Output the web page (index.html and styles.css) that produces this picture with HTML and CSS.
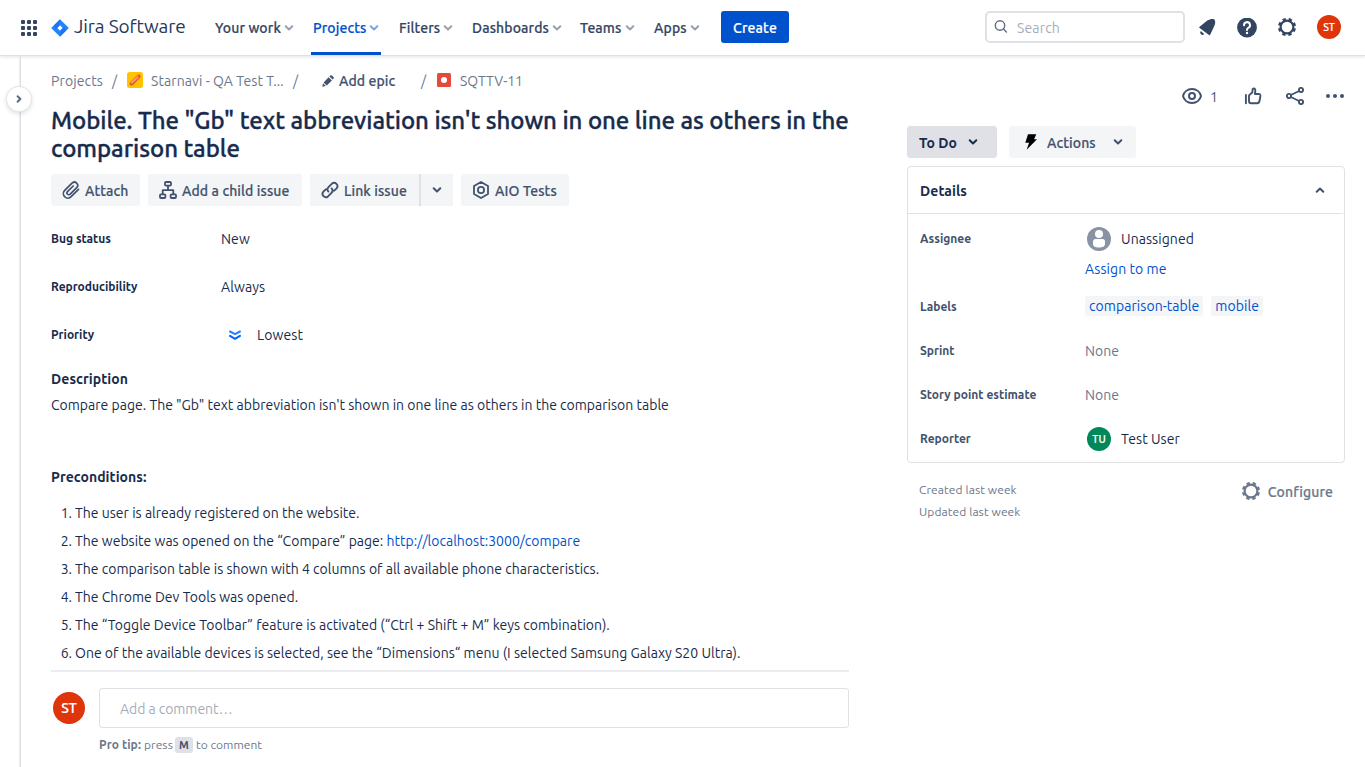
FILE: index.html
```html
<!DOCTYPE html>
<html lang="en">
<head>
<meta charset="utf-8">
<title>SQTTV-11 - Jira Software</title>
<link rel="stylesheet" href="styles.css">
</head>
<body>
<svg width="0" height="0" class="defs">
  <symbol id="chev" viewBox="0 0 10 8"><path d="M1.7 2.2 5 5.5 8.3 2.2" fill="none" stroke="currentColor" stroke-width="2" stroke-linecap="round" stroke-linejoin="round"/></symbol>
  <symbol id="gear" viewBox="0 0 24 24"><g fill="none" stroke="currentColor"><circle cx="12" cy="12" r="6.4" stroke-width="2.2"/><circle cx="12" cy="12" r="7.9" stroke-width="2.4" stroke-dasharray="3.3 2.905" stroke-dashoffset="-1.45"/></g></symbol>
</svg>
<header class="top">
  <svg class="switcher" width="16" height="16" viewBox="0 0 16 16" fill="#344563"><rect width="4" height="4" rx="1"/><rect x="6" width="4" height="4" rx="1"/><rect x="12" width="4" height="4" rx="1"/><rect y="6" width="4" height="4" rx="1"/><rect x="6" y="6" width="4" height="4" rx="1"/><rect x="12" y="6" width="4" height="4" rx="1"/><rect y="12" width="4" height="4" rx="1"/><rect x="6" y="12" width="4" height="4" rx="1"/><rect x="12" y="12" width="4" height="4" rx="1"/></svg>
  <div class="logo">
    <svg width="18" height="18" viewBox="0 0 18 18"><path fill="#2684ff" fill-rule="evenodd" d="M9 .3 17.4 8.4Q18 9 17.4 9.6L9 17.7.6 9.6Q0 9 .6 8.4ZM9 6.3 6.3 9 9 11.7 11.7 9Z"/><path fill="#0f62de" d="M9 .3V3.6Q7 5.4 9 6.3L4.6 10.6 3 6.2ZM9 17.7V14.4Q11 12.6 9 11.7L13.4 7.4 15 11.8Z" opacity=".45"/></svg>
    <span class="brand">Jira Software</span>
  </div>
  <nav class="nav">
    <a class="n1"><span>Your work</span><svg width="10" height="8"><use href="#chev"/></svg></a>
    <a class="n2 active"><span>Projects</span><svg width="10" height="8"><use href="#chev"/></svg></a>
    <a class="n3"><span>Filters</span><svg width="10" height="8"><use href="#chev"/></svg></a>
    <a class="n4"><span>Dashboards</span><svg width="10" height="8"><use href="#chev"/></svg></a>
    <a class="n5"><span>Teams</span><svg width="10" height="8"><use href="#chev"/></svg></a>
    <a class="n6"><span>Apps</span><svg width="10" height="8"><use href="#chev"/></svg></a>
  </nav>
  <button class="create"><span>Create</span></button>
  <div class="search"><svg width="14" height="14" viewBox="0 0 14 14" fill="none" stroke="#5e6c84" stroke-width="1.4" stroke-linecap="round"><circle cx="6" cy="5.500" r="4.700"/><path d="m9.500 9 2.900 2.900"/></svg><span>Search</span></div>
  <div class="tools">
    <svg width="20" height="20" viewBox="0 0 20 20"><path fill="#344563" d="M2.300 9.800Q1.900 9.300 2.600 8.800L10.300 2.600C12.500 1 16 .6 17.400 1.400 18.600 3.200 18.400 5.500 17.300 7.900L13.300 16.600Q12.800 17.500 12 16.900ZM3.800 13 7.200 16A2.200 2.200 0 0 1 3.800 13Z"/></svg>
    <svg width="20" height="20" viewBox="0 0 20 20"><circle cx="10" cy="9.500" r="9.900" fill="#344563"/><path d="M7 7.300A3 3 0 1 1 11.200 9.900Q10 10.500 10 11.900" fill="none" stroke="#fff" stroke-width="2" stroke-linecap="round"/><circle cx="10" cy="15" r="1.200" fill="#fff"/></svg>
    <svg class="gear-dark" width="24" height="24"><use href="#gear"/></svg>
    <span class="avatar a24 red">ST</span>
  </div>
</header>
<div class="page">
  <div class="rail"><span class="expand"><svg width="8" height="10" viewBox="0 0 8 10"><path d="M2.600 2.200 5.400 5 2.600 7.800" fill="none" stroke="#5e6c84" stroke-width="2" stroke-linecap="round" stroke-linejoin="round"/></svg></span></div>
  <main class="main">
    <div class="crumbs">
      <span class="c1">Projects</span><span class="sl s1">/</span>
      <svg class="proj" width="16" height="16" viewBox="0 0 16 16"><rect width="16" height="16" rx="2.500" fill="#ffc400"/><path d="M4.600 11.600 11.600 4.400" stroke="#f0541e" stroke-width="4.200" stroke-linecap="round"/><path d="M4 10.400 10.600 3.600" stroke="#ff8b2e" stroke-width="1.600" stroke-linecap="round"/><path d="m5 11.400 1.200-2.200 1.600-.4.600-1.600 1.800-.6 1-1.800" fill="none" stroke="#ffc9b0" stroke-width=".9"/></svg>
      <span class="c2">Starnavi - QA Test T...</span><span class="sl s2">/</span>
      <svg class="pencil" width="12" height="12" viewBox="0 0 12 12" fill="#42526e"><path d="M.3 11.700 1 8.200 3.900 11ZM1.600 7.500 6.600 2.300 9.900 5.400 4.800 10.500ZM7.400 1.500 8.400.6Q9.300 0 10.200.7L11.500 2Q12.200 2.800 11.600 3.600L10.700 4.600Z"/></svg>
      <span class="c3">Add epic</span><span class="sl s3">/</span>
      <svg class="bug" width="14" height="14" viewBox="0 0 14 14"><rect width="14" height="14" rx="1.500" fill="#e5493a"/><circle cx="7" cy="7" r="3" fill="#fff"/></svg>
      <span class="c4">SQTTV-11</span>
    </div>
    <h1>Mobile. The "Gb" text abbreviation isn't shown in one line as others in the<br>comparison table</h1>
    <div class="actions">
      <button class="btn b1"><svg width="18" height="18" viewBox="0 0 18 18" fill="none" stroke="#42526e" stroke-width="1.700" stroke-linecap="round"><path d="M16.500 8.300 9.100 15.700A4.400 4.400 0 0 1 2.700 9.400L10 2.200A3.200 3.200 0 0 1 14.700 6.700L8.200 13.200A1.800 1.800 0 0 1 5.500 10.600L11.200 5"/></svg><span>Attach</span></button>
      <button class="btn b2"><svg width="18" height="18" viewBox="0 0 18 18" fill="none" stroke="#42526e" stroke-width="1.800" stroke-linejoin="round"><rect x="6" y="1" width="6" height="3.600" rx="1"/><rect x="1" y="13.300" width="5.400" height="3.700" rx="1"/><rect x="11.600" y="13.300" width="5.400" height="3.700" rx="1"/><path d="M9 4.600V9M3.700 13V9.200H14.300V13"/></svg><span>Add a child issue</span></button>
      <div class="split"><button class="btn b3"><svg width="18" height="18" viewBox="0 0 18 18" fill="none" stroke="#42526e" stroke-width="1.900" stroke-linecap="round"><path d="M7.400 10.600A3.300 3.300 0 0 1 7.500 6.100L11 2.600A3.300 3.300 0 0 1 15.600 7.300L13.200 9.700M10.600 7.400A3.300 3.300 0 0 1 10.500 11.900L7 15.400A3.300 3.300 0 0 1 2.400 10.700L4.800 8.300"/></svg><span>Link issue</span></button><button class="btn more"><svg width="10" height="8"><use href="#chev"/></svg></button></div>
      <button class="btn b4"><svg width="18" height="18" viewBox="0 0 18 18" fill="none" stroke="#42526e" stroke-width="1.800" stroke-linejoin="round"><path d="m9 1 7 4v8l-7 4-7-4V5Z"/><circle cx="9" cy="9" r="3.100"/></svg><span>AIO Tests</span></button>
    </div>
    <dl class="fields">
      <dt>Bug status</dt><dd>New</dd>
      <dt>Reproducibility</dt><dd>Always</dd>
      <dt>Priority</dt><dd class="v3"><svg width="14" height="12" viewBox="0 0 14 12" fill="none" stroke-width="2" stroke-linecap="round" stroke-linejoin="round"><path d="M2 2.500 7 5.100 12 2.500" stroke="#2684ff"/><path d="M2 6.900 7 9.800 12 6.900" stroke="#0065ff"/></svg><span>Lowest</span></dd>
    </dl>
    <h2>Description</h2>
    <p class="desc">Compare page. The "Gb" text abbreviation isn't shown in one line as others in the comparison table</p>
    <h3>Preconditions:</h3>
    <ol class="steps">
      <li><i>1.</i><span>The user is already registered on the website.</span></li>
      <li><i>2.</i><span>The website was opened on the “Compare” page: <a>http://localhost:3000/compare</a></span></li>
      <li><i>3.</i><span>The comparison table is shown with 4 columns of all available phone characteristics.</span></li>
      <li><i>4.</i><span>The Chrome Dev Tools was opened.</span></li>
      <li><i>5.</i><span>The “Toggle Device Toolbar” feature is activated (“Ctrl + Shift + M” keys combination).</span></li>
      <li><i>6.</i><span>One of the available devices is selected, see the “Dimensions“ menu (I selected Samsung Galaxy S20 Ultra).</span></li>
    </ol>
    <div class="comment">
      <span class="avatar a32 red">ST</span>
      <div class="cbody">
        <div class="cbox">Add a comment…</div>
        <div class="tip"><b>Pro tip:</b><span class="t1">press</span><kbd>M</kbd><span>to comment</span></div>
      </div>
    </div>
  </main>
  <aside class="side">
    <div class="icons">
      <svg width="20" height="16" viewBox="0 0 20 16" fill="none" stroke="#42526e" stroke-width="2"><path d="M1 8C2 4 5.500 1 10 1S18 4 19 8C18 12 14.500 15 10 15S2 12 1 8Z"/><circle cx="10" cy="8" r="3"/></svg>
      <span class="watch">1</span>
      <svg class="thumb" width="18" height="18" viewBox="0 0 18 18" fill="none" stroke="#42526e" stroke-width="1.900" stroke-linejoin="round" stroke-linecap="round"><path d="M1.900 8V16.200M5 8.400 8 5.800Q8.600 5.200 8.500 3.300 8.500 1.500 9.900 1.500 11.400 1.500 11.300 4L10.900 7H14.700Q16.700 7 16.400 9L15.500 14Q15.100 16.200 13 16.200H7Q5 16.200 5 14.200Z"/></svg>
      <svg class="share" width="18" height="18" viewBox="0 0 18 18" fill="none" stroke="#42526e" stroke-width="1.900"><circle cx="3" cy="9" r="2.100"/><circle cx="15" cy="3" r="2.100"/><circle cx="15" cy="15" r="2.100"/><path d="M4.900 8 13.100 4M4.900 10 13.100 14"/></svg>
      <svg width="18" height="4" viewBox="0 0 18 4" fill="#42526e"><circle cx="2" cy="2" r="2"/><circle cx="9" cy="2" r="2"/><circle cx="16" cy="2" r="2"/></svg>
    </div>
    <div class="status">
      <button class="todo"><span>To Do</span><svg width="10" height="8"><use href="#chev"/></svg></button>
      <button class="act"><svg width="12" height="16" viewBox="0 0 12 16"><path d="M3 .3H11.300L9 5.200H12L1.600 15.800 4.100 8.700H.3Z"/></svg><span>Actions</span><svg width="10" height="8"><use href="#chev"/></svg></button>
    </div>
    <section class="panel">
      <div class="phead"><span>Details</span><svg width="10" height="8"><use href="#chev"/></svg></div>
      <div class="rows">
        <div class="row r1"><b>Assignee</b><div class="who"><svg width="24" height="24" viewBox="0 0 24 24"><circle cx="12" cy="12" r="12" fill="#8993a4"/><circle cx="12" cy="7" r="4" fill="#fff"/><path fill="#fff" d="M6 14.500A2.500 2.500 0 0 1 8.500 12H15.500A2.500 2.500 0 0 1 18 14.500V17C18 19.500 15.500 20.500 12 20.500S6 19.500 6 17Z"/></svg><span>Unassigned</span></div></div>
        <div class="row r2"><a>Assign to me</a></div>
        <div class="row r3"><b>Labels</b><div class="tags"><a>comparison-table</a><a>mobile</a></div></div>
        <div class="row"><b>Sprint</b><span class="none">None</span></div>
        <div class="row"><b>Story point estimate</b><span class="none">None</span></div>
        <div class="row"><b>Reporter</b><div class="who"><span class="avatar a24 green">TU</span><span>Test User</span></div></div>
      </div>
    </section>
    <footer class="foot">
      <div class="dates"><div>Created last week</div><div>Updated last week</div></div>
      <div class="conf"><svg width="24" height="24"><use href="#gear"/></svg><span>Configure</span></div>
    </footer>
  </aside>
</div>
</body>
</html>
```
FILE: styles.css
```css
*{box-sizing:border-box}
body{margin:0;width:1365px;height:767px;overflow:hidden;background:#fff;color:#172b4d;font:14px/20px Ubuntu,"Noto Sans",sans-serif;letter-spacing:.008px}
.defs{position:absolute}
svg{flex:none;display:block}
span,b,a{white-space:nowrap}
button{border:0;margin:0;padding:0;font:inherit;color:inherit}
a{color:#0052cc}
.nav span,.create,.btn,.status span,.c3,.conf span{-webkit-text-stroke:.2px currentColor}
.top{height:56px;display:flex;align-items:center;padding:0 24px 0 21px;border-bottom:1px solid #dfe1e6;box-shadow:0 1px 3px rgba(9,30,66,.12);font-weight:500;color:#344563}
.logo{display:flex;align-items:center;gap:5px;margin-left:14px;width:149px}
.brand{font-size:19px;font-weight:400;letter-spacing:-.12px;color:#253858;padding-bottom:3px}
.nav{display:flex;height:100%;margin-left:15px}
.nav a{display:flex;align-items:center;justify-content:space-between;height:55px;margin-right:18px;color:#344563;letter-spacing:.12px}
.nav svg{color:#97a0af}
.nav .active{color:#0052cc;border-bottom:3px solid #0052cc;padding:3px 2px 0}
.nav .active svg{color:#7aa3e5}
.nav .n1{width:79px;margin-right:17px}.nav .n2{width:70px}.nav .n3{width:54px;margin-right:19px}.nav .n4{width:90px}.nav .n5{width:55px;margin-right:19px}.nav .n6{width:46px;margin-right:21px}
.create{width:68px;height:32px;margin-top:-1px;border-radius:3px;background:#0052cc;color:#fff;letter-spacing:.15px}
.create span{position:relative;top:1px}
.search{margin:-1px 0 0 auto;display:flex;align-items:center;width:200px;height:32px;border:2px solid #dfe1e6;border-radius:5px;padding-left:7px;gap:9px;color:#a5adba;font-weight:400;letter-spacing:.15px}
.search span{padding-top:1px}
.tools{display:flex;align-items:center;gap:18px;margin-left:12px;padding-left:2px}
.tools svg:first-child{margin-left:-2px;margin-right:2px}
.gear-dark,.top .avatar{margin-top:-1px}
.avatar{display:flex;align-items:center;justify-content:center;border-radius:50%;color:#fff;font-weight:500;flex:none;-webkit-text-stroke:.2px #fff}
.a24{width:24px;height:24px;font-size:10.5px}.a32{width:32px;height:32px;font-size:14px}
.red{background:#de350b}.green{background:#00875a}
.page{display:flex;height:711px}
.rail{width:21px;border-right:1px solid #dfe1e6;box-shadow:inset -2px 0 1px -1px #ebecf0;flex:none;display:flex;padding:31px 0 0 7px}
.expand{flex:none;width:24px;height:24px;border-radius:50%;background:#fff;box-shadow:0 0 0 1px #e4e6ea,0 2px 4px 1px rgba(9,30,66,.13);display:flex;align-items:center;justify-content:center;position:relative}
.main{width:798px;margin-left:30px;flex:none;display:flex;flex-direction:column}
.crumbs{display:flex;align-items:center;height:20px;margin-top:15px;color:#6b778c}
.c1{width:52px;letter-spacing:.12px}
.c2{width:133px;letter-spacing:.08px}
.c3{width:57px;color:#42526e;font-weight:500;letter-spacing:.08px}
.sl{width:6px}
.s1{margin:0 9px}.s2{margin:0 23px 0 9px}.s3{margin:0 10px 0 24px}
.proj{margin:-2px 8px 0 0}.pencil{margin-right:5px}.c3{margin-right:1px}.bug{margin:-2px 9px 0 0}
h1{margin:16px 0 11px;font-size:24px;line-height:28px;font-weight:500;letter-spacing:-.05px;height:56px;white-space:nowrap;-webkit-text-stroke:.35px currentColor}
.actions{display:flex;gap:8px}
.btn{height:32px;background:#f4f5f7;border-radius:3px;color:#42526e;font-weight:500;letter-spacing:.1px;display:flex;align-items:center;padding-left:11px;gap:5px}
.btn span,.status span,.phead span,.conf span{padding-top:1px}
.split{display:flex;gap:2px;background:#dfe1e6;border-radius:3px}
.b1{width:89px}.b2{width:154px}.b3{width:109px;border-radius:3px 0 0 3px}.b4{width:108px}
.more{width:32px;justify-content:center;padding:0;border-radius:0 3px 3px 0}
.fields{margin:9px 0 0;display:grid;grid-template-columns:170px 1fr;grid-auto-rows:48px;align-items:center}
dt{font-size:12px;font-weight:600}
dd{margin:0;display:flex;align-items:center;letter-spacing:.1px}
.v3{padding-left:7px;gap:15px}
h2,h3{margin:10px 0 0;font-size:14px;font-weight:600;line-height:20px;letter-spacing:.06px}
.desc{margin:6px 0 0}
h3{margin-top:52px}
.steps{list-style:none;margin:16px 0 0;padding:0;height:167px}
.steps li{display:flex;height:28px;letter-spacing:.015px}
.steps i{font-style:normal;width:21px;margin-right:3px;text-align:right}
.comment{border-top:2px solid #ebecf0;padding:16px 0 0 2px;display:flex;gap:14px}
.comment .avatar{margin-top:4px}
.cbody{width:750px}
.cbox{height:40px;border:1px solid #dfe1e6;border-radius:3px;padding:10px 20px;color:#a5adba;letter-spacing:-.05px}
.tip{display:flex;align-items:center;font-size:12px;height:16px;margin-top:9px;color:#6b778c}
.tip b{font-weight:600;letter-spacing:.1px}
kbd{background:#dfe1e6;border-radius:3px;width:18px;height:16px;text-align:center;font:bold 11px/16px Ubuntu,"Noto Sans",sans-serif;color:#42526e;margin:0 3px 0 2px}
.t1{margin-left:3px;letter-spacing:.08px}
.side{width:438px;margin-left:58px;flex:none}
.icons{height:24px;margin-top:28px;display:flex;align-items:center;justify-content:flex-end;padding-right:1px}
.watch{margin:2px 26px 0 8px;color:#42526e}
.share{margin:0 22px 0 24px}
.status{display:flex;gap:12px;margin-top:18px}
.status button{height:32px;border-radius:3px;display:flex;align-items:center;background:#f4f5f7;color:#42526e;font-weight:500;letter-spacing:.1px;padding:0 12px}
.status .todo{width:90px;background:#dfe1e6;color:#172b4d;font-weight:600;letter-spacing:.03px;gap:11px}
.todo span{-webkit-text-stroke:0}
.status .act{width:127px;padding:0 13px 0 16px;gap:10px}
.act svg:last-child{margin-left:auto}
.panel{margin-top:8px;border:1px solid #dfe1e6;border-radius:4px;height:297px}
.phead{height:47px;border-bottom:1px solid #dfe1e6;border-radius:0 0 3px 0;display:flex;justify-content:space-between;align-items:center;padding:0 19px 0 12px;font-weight:600;letter-spacing:.08px}
.phead svg{transform:rotate(180deg);color:#42526e}
.rows{padding:9px 12px 0}
.row{display:grid;grid-template-columns:165px 1fr;align-items:center;height:44px}
.row b{font-size:12px;font-weight:600;color:#42526e}
.row.r1{height:32px}.row.r2{height:28px}.row.r3{height:46px}
.r3 b{padding-top:2px}
.r2 a{grid-column:2;letter-spacing:.06px}
.who{display:flex;align-items:center;gap:10px;padding-left:2px;letter-spacing:.07px}
.tags{display:flex;gap:8px}
.tags a{background:#f4f5f7;border-radius:3px;padding:0 4px;letter-spacing:.06px}
.none{color:#6b778c}
.foot{display:flex;justify-content:space-between;padding:16px 12px;color:#6b778c}
.dates{font-size:12px;line-height:22px;letter-spacing:.08px}
.conf{display:flex;gap:5px;height:24px;align-items:center;letter-spacing:.12px;font-weight:500}
```
